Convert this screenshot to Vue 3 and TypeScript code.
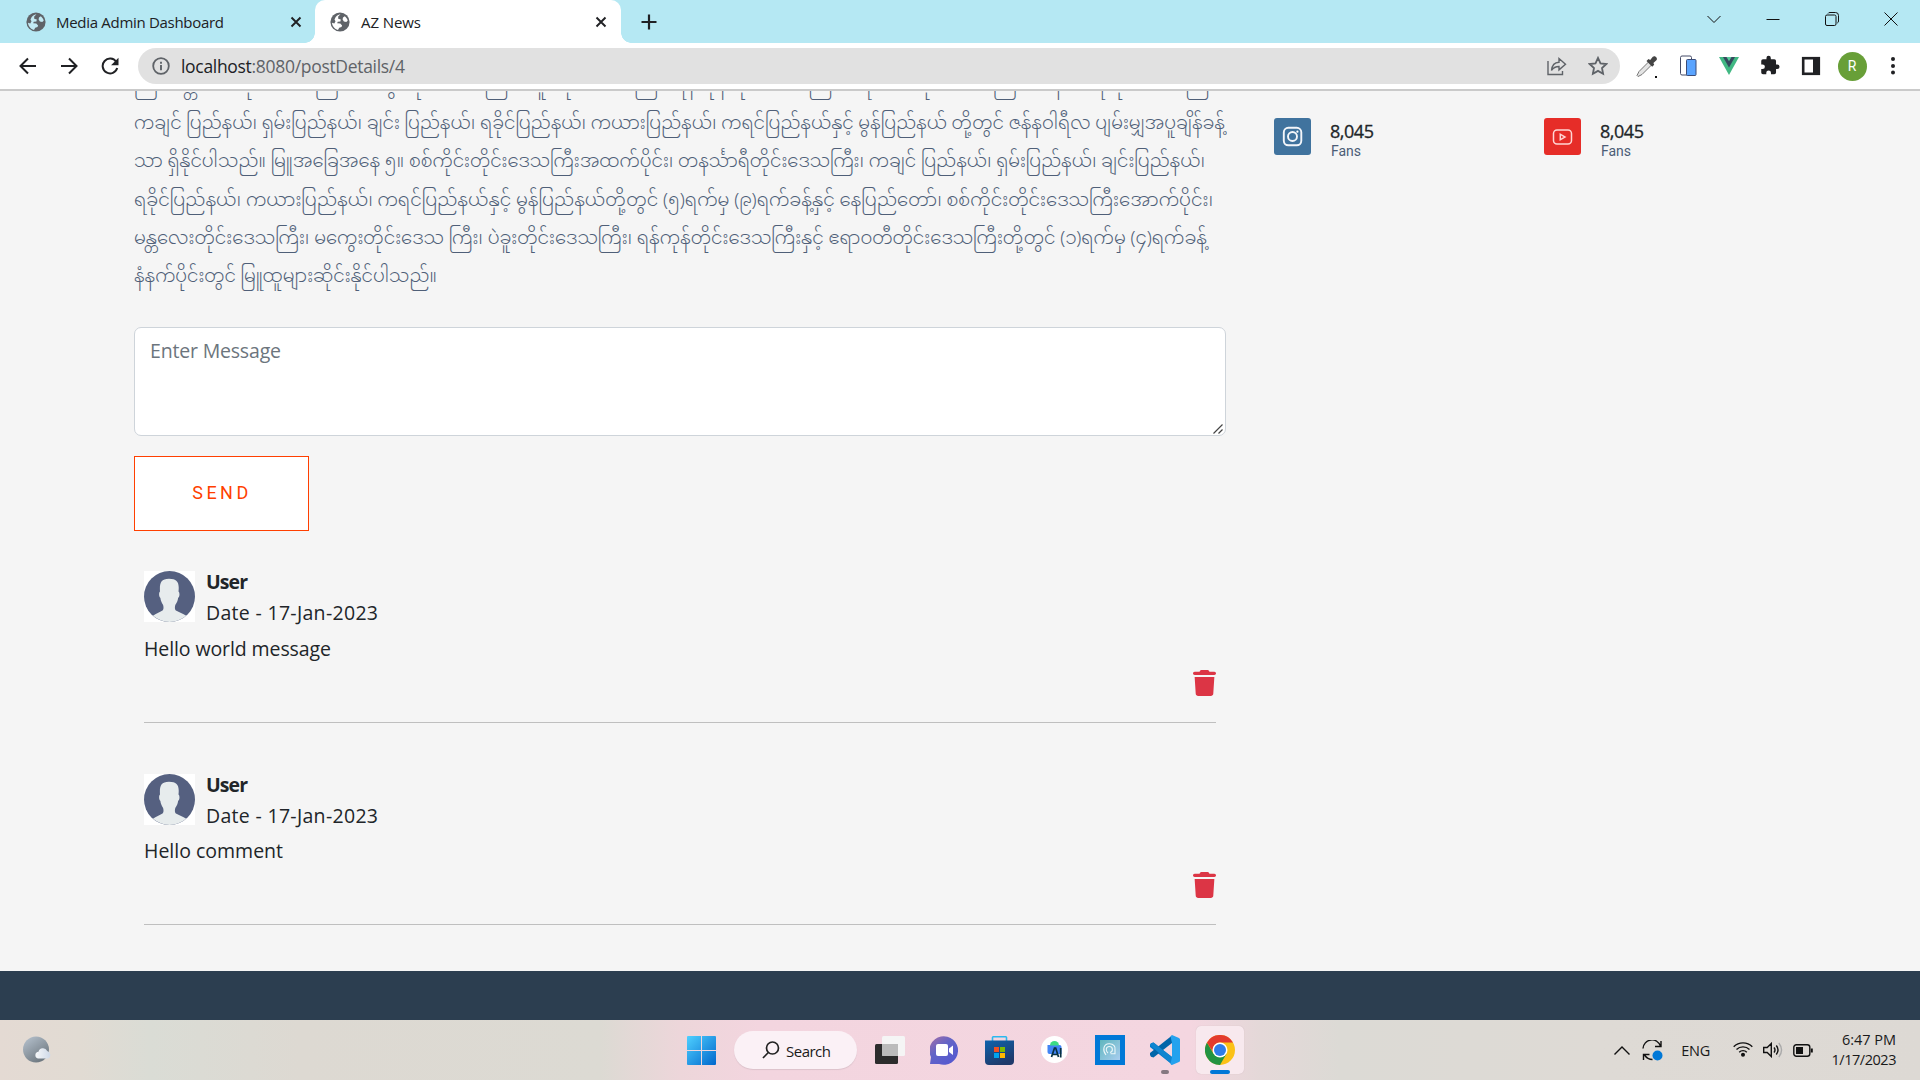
<script setup lang="ts">
import type { Directive } from 'vue'

interface Line { text: string; width: number }

const lines: Line[] = [
  { text: 'ကြီး၊ မန္တလေးတိုင်းဒေသကြီး၊ မကွေးတိုင်းဒေသကြီး၊ ပဲခူးတိုင်းဒေသကြီး၊ ရန်ကုန်တိုင်းဒေသကြီး၊ ဧရာဝတီတိုင်းဒေသကြီး၊ တနင်္သာရီတိုင်းဒေသကြီး၊', width: 1086 },
  { text: 'ကချင် ပြည်နယ်၊ ရှမ်းပြည်နယ်၊ ချင်း ပြည်နယ်၊ ရခိုင်ပြည်နယ်၊ ကယားပြည်နယ်၊ ကရင်ပြည်နယ်နှင့် မွန်ပြည်နယ် တို့တွင် ဇန်နဝါရီလ ပျမ်းမျှအပူချိန်ခန့်', width: 1091 },
  { text: 'သာ ရှိနိုင်ပါသည်။ မြူအခြေအနေ ၅။ စစ်ကိုင်းတိုင်းဒေသကြီးအထက်ပိုင်း၊ တနင်္သာရီတိုင်းဒေသကြီး၊ ကချင် ပြည်နယ်၊ ရှမ်းပြည်နယ်၊ ချင်းပြည်နယ်၊', width: 1071 },
  { text: 'ရခိုင်ပြည်နယ်၊ ကယားပြည်နယ်၊ ကရင်ပြည်နယ်နှင့် မွန်ပြည်နယ်တို့တွင် (၅)ရက်မှ (၉)ရက်ခန့်နှင့် နေပြည်တော်၊ စစ်ကိုင်းတိုင်းဒေသကြီးအောက်ပိုင်း၊', width: 1079 },
  { text: 'မန္တလေးတိုင်းဒေသကြီး၊ မကွေးတိုင်းဒေသ ကြီး၊ ပဲခူးတိုင်းဒေသကြီး၊ ရန်ကုန်တိုင်းဒေသကြီးနှင့် ဧရာဝတီတိုင်းဒေသကြီးတို့တွင် (၁)ရက်မှ (၄)ရက်ခန့်', width: 1073 },
  { text: 'နံနက်ပိုင်းတွင် မြူထူများဆိုင်းနိုင်ပါသည်။', width: 303 },
]

const comments = [
  { user: 'User', date: 'Date - 17-Jan-2023', text: 'Hello world message', width: 187 },
  { user: 'User', date: 'Date - 17-Jan-2023', text: 'Hello comment', width: 139 },
]

// Spreads the letters of a label over a given width.
const vFit: Directive<HTMLElement, number> = {
  mounted(el, { value }) {
    const n = (el.textContent ?? '').length
    const w = el.getBoundingClientRect().width
    if (n > 1) el.style.letterSpacing = `${((value - w) / (n - 1)).toFixed(3)}px`
  },
}

// Scales a whole line of script horizontally to a given width.
const vStretch: Directive<HTMLElement, number> = {
  mounted(el, { value }) {
    el.style.transform = `scaleX(${value / el.getBoundingClientRect().width})`
  },
}
</script>

<template>
  <div class="screen">
    <header class="tabs">
      <div class="tab">
        <svg class="globe" viewBox="0 0 20 20"><circle cx="10" cy="10" r="9.6" fill="#5f6368" /><path d="M10.500 2.200 8.200 4.600v2.100l2.600.8-.4 1.900-2.700.3-.5 1.600 3.100.3 1.800 1.900-.6 1.600-2.300.7-1.200 2.100c-3.300-.7-5.800-3.600-6-7.100l2.300.7 1.200-2.200-1-1.700 1.200-2.500C7.500 3 9 2.200 10.500 2.200zM13 5.500l1.800-1.200c1.400 1.100 2.500 2.600 2.900 4.400l-1.500 1.200-2.300-.5-1.300-1.900z" fill="#c3eaf3" /></svg>
        <span v-fit="168" class="tab-name">Media Admin Dashboard</span>
        <svg class="x" viewBox="0 0 12 12"><path d="M1.500 1.500l9 9M10.500 1.500l-9 9" /></svg>
      </div>
      <div class="tab active">
        <svg class="globe" viewBox="0 0 20 20"><circle cx="10" cy="10" r="9.600" fill="#5f6368" /><path d="M10.500 2.200 8.200 4.600v2.100l2.600.8-.4 1.900-2.700.3-.5 1.600 3.100.3 1.800 1.900-.6 1.600-2.300.7-1.200 2.100c-3.300-.7-5.800-3.600-6-7.100l2.300.7 1.200-2.200-1-1.700 1.200-2.500C7.500 3 9 2.200 10.500 2.200zM13 5.500l1.800-1.200c1.400 1.100 2.500 2.600 2.900 4.400l-1.500 1.200-2.300-.5-1.300-1.900z" fill="#fff" /></svg>
        <span v-fit="60" class="tab-name">AZ News</span>
        <svg class="x" viewBox="0 0 12 12"><path d="M1.500 1.500l9 9M10.500 1.500l-9 9" /></svg>
      </div>
      <svg class="plus" viewBox="0 0 16 16"><path d="M8 .5v15M.5 8h15" /></svg>
      <div class="window">
        <svg viewBox="0 0 14 14"><path d="M.5 4l6.500 6.500L13.500 4" /></svg>
        <svg viewBox="0 0 14 14"><path d="M.5 7.500h13" /></svg>
        <svg viewBox="0 0 14 14"><rect x=".5" y="3" width="10.500" height="10.500" rx="1.500" /><path d="M3 1.500Q3.500.5 5 .5h5.500a3 3 0 0 1 3 3V9q0 1.500-1.200 2" /></svg>
        <svg viewBox="0 0 14 14"><path d="M.5.5l13 13M13.500.5l-13 13" /></svg>
      </div>
    </header>

    <div class="toolbar">
      <svg class="nav" viewBox="0 0 18 18"><path d="M17 9H2M9 1.500L1.500 9 9 16.500" /></svg>
      <svg class="nav" viewBox="0 0 18 18"><path d="M1 9h15M9 1.500L16.500 9 9 16.500" /></svg>
      <svg class="nav" viewBox="0 0 18 18"><path d="M15.200 4.800A7.400 7.400 0 1 0 16.200 11" /><path d="M17.500.8v7.400h-7.400z" fill="#202124" stroke="none" /></svg>
      <div class="omnibox">
        <svg class="info" viewBox="0 0 18 18"><circle cx="9" cy="9" r="7.800" fill="none" stroke="#5f6368" stroke-width="1.800" /><path d="M9 8v5.200M9 4.700v2" stroke="#5f6368" stroke-width="1.900" /></svg>
        <span v-fit="224" class="url"><b>localhost</b>:8080/postDetails/4</span>
        <svg class="share" viewBox="0 0 20 20"><path d="M1 5v13.500h14.500V15M4.500 14.500c.5-5 3-8 7.500-8.200V2.500l6.500 5.700-6.500 5.700V10.500c-3.500 0-5.800 1.200-7.500 4z" /></svg>
        <svg class="star" viewBox="0 0 20 20"><path d="M10 1.900l2.500 5.400 5.800.7-4.300 4 1.100 5.800-5.100-2.900-5.100 2.900L6 12 1.700 8l5.800-.7z" /></svg>
      </div>
      <div class="extensions">
        <svg viewBox="0 0 24 24"><path d="M14 7.500l3 3L7 20.500 3 22.500l-1-1L4 17.500z" fill="#e4e4e4" stroke="#777" /><path d="M11.500 7l2-2 1.700 1 2.600-3.200c2-2 5.500 1.300 3.600 3.500l-3 2.700.8 1.800-2 2z" fill="#444" /><rect x="20" y="22" width="2" height="2" fill="#111" /></svg>
        <svg viewBox="0 0 24 24"><rect x="4.500" y="2" width="11" height="19" rx="1.500" fill="#fff" stroke="#454b66" /><rect x="10.500" y="5.500" width="9.500" height="16" rx="1" fill="#5aa4ff" stroke="#3b4c78" /></svg>
        <svg viewBox="0 0 24 24"><path d="M2 3h20L12 21z" fill="#41b883" /><path d="M6 3h12l-6 10.500z" fill="#35495e" /><path d="M9.500 3h5L12 7.200z" fill="#59cb9a" /></svg>
        <svg viewBox="0 0 24 24"><path d="M20.500 11H19V7a2 2 0 0 0-2-2h-4V3.500a2.500 2.500 0 0 0-5 0V5H4a2 2 0 0 0-2 2v3.800h1.500a2.700 2.700 0 0 1 0 5.400H2V20a2 2 0 0 0 2 2h3.800v-1.500a2.700 2.700 0 0 1 5.400 0V22H17a2 2 0 0 0 2-2v-4h1.500a2.500 2.500 0 0 0 0-5z" fill="#202124" transform="translate(1.500 1) scale(.87)" /></svg>
        <svg viewBox="0 0 24 24"><rect x="4.200" y="4.200" width="15.600" height="15.600" fill="#fff" stroke="#202124" stroke-width="2.600" /><path d="M14 3h7v18h-7z" fill="#202124" /></svg>
        <span class="profile">R</span>
        <svg viewBox="0 0 24 24"><circle cx="12" cy="5" r="2" /><circle cx="12" cy="12" r="2" /><circle cx="12" cy="18.500" r="2" /></svg>
      </div>
    </div>

    <main class="page">
      <section class="post">
        <div class="article">
          <p v-for="line in lines" :key="line.text"><span v-stretch="line.width">{{ line.text }}</span></p>
        </div>
        <div class="message">
          <span v-fit="131">Enter Message</span>
          <svg viewBox="0 0 10 10"><path d="M.5 9.500l9-9M5.500 9.500l4-4" /></svg>
        </div>
        <button class="send">SEND</button>
        <article v-for="(c, i) in comments" :key="i" class="comment">
          <div class="author">
            <svg class="avatar" viewBox="0 0 51 51"><rect width="51" height="51" fill="#fff" /><circle cx="25.500" cy="25.500" r="25.500" fill="#556080" /><path d="M9 44.800c3-2.300 6.500-3.500 9.500-5.300 1.300-.8 1.200-4.500.5-5.800-1.300-2-2.300-4-2.600-6.700-1.600-1-1.700-5.700-.4-6.500-.5-8 .5-12.800 9-12.800s10.500 4 9.500 12.800c1.400.8 1.300 5.500-.4 6.500-.3 2.700-1.400 4.800-2.700 6.700-.7 1.300-.8 5 .5 5.800 3.300 1.800 7 3 10.300 5.300a25.500 25.500 0 0 1-33.200 0z" fill="#e7eced" /></svg>
            <div class="who">
              <span><strong v-fit="42">{{ c.user }}</strong></span>
              <span><span v-fit="172">{{ c.date }}</span></span>
            </div>
          </div>
          <div class="text"><span v-fit="c.width">{{ c.text }}</span></div>
          <svg class="trash" viewBox="0 0 448 512" preserveAspectRatio="none"><path d="M135.200 17.700C140.600 6.800 151.700 0 163.800 0H284.200c12.100 0 23.200 6.800 28.600 17.700L320 32h96c17.700 0 32 14.300 32 32s-14.300 32-32 32H32C14.300 96 0 81.700 0 64S14.300 32 32 32h96l7.200-14.300zM32 136H416L394.800 467c-1.600 25.300-22.600 45-47.900 45H101.100c-25.300 0-46.300-19.700-47.900-45L32 136z" /></svg>
        </article>
      </section>
      <aside class="socials">
        <div class="social">
          <svg viewBox="0 0 37 37"><rect width="37" height="37" rx="3" fill="#40739e" /><g fill="none" stroke="#f3f6fa" stroke-width="1.900"><rect x="9.800" y="9.800" width="17.500" height="17.500" rx="4.500" /><circle cx="18.500" cy="18.500" r="4.500" /></g><circle cx="23.400" cy="13.700" r="1.100" fill="#fff" /></svg>
          <div><strong v-fit="44">8,045</strong><small>Fans</small></div>
        </div>
        <div class="social">
          <svg viewBox="0 0 37 37"><rect width="37" height="37" rx="3" fill="#e62d28" /><g fill="none" stroke="#ffd6d4" stroke-width="1.500"><rect x="9.500" y="12" width="18" height="14" rx="3.500" /><path d="M16.300 16.200v5.600l4.700-2.800z" /></g></svg>
          <div><strong v-fit="44">8,045</strong><small>Fans</small></div>
        </div>
      </aside>
    </main>
    <footer class="footer"></footer>

    <div class="taskbar">
      <svg class="weather" viewBox="0 0 30 28"><defs><linearGradient id="moon" x2=".7" y2="1"><stop stop-color="#b9c5d1" /><stop offset="1" stop-color="#6c767e" /></linearGradient><linearGradient id="cloud" x2="1"><stop stop-color="#f5f7f9" /><stop offset="1" stop-color="#cfd9e8" /></linearGradient></defs><circle cx="13" cy="13.500" r="13" fill="url(#moon)" /><path d="M15 22.500a3.400 3.400 0 0 1 .5-6.700 4.600 4.600 0 0 1 8.700-.8 4 4 0 0 1 1 7.500z" fill="url(#cloud)" /></svg>
      <div class="apps">
        <svg class="start" viewBox="0 0 29 29"><defs><linearGradient id="win" x2="1" y2="1"><stop stop-color="#4fd0ff" /><stop offset="1" stop-color="#0067cc" /></linearGradient></defs><path d="M1 0h13v14H0V1q0-1 1-1zM15 0h13q1 0 1 1v13H15zM0 15h14v14H1q-1 0-1-1zM15 15h14v13q0 1-1 1H15z" fill="url(#win)" /></svg>
        <div class="search">
          <svg viewBox="0 0 18 18"><circle cx="10.500" cy="7" r="6" /><path d="M6.300 11.500L1 17" /></svg>
          <span v-fit="45">Search</span>
        </div>
        <svg class="taskview" viewBox="0 0 30 28"><rect y="8" width="23" height="20" rx="1.500" fill="#2c2c2c" /><rect x="7" width="23" height="20" rx="1.500" fill="#f5f5f5" /><path d="M7 8h16v12H8.500Q7 20 7 18.500z" fill="#bbb" /></svg>
        <svg class="chat" viewBox="0 0 29 29"><defs><linearGradient id="cht" x2=".8" y2="1"><stop stop-color="#a66fa6" /><stop offset=".45" stop-color="#6264c7" /><stop offset="1" stop-color="#5558d0" /></linearGradient></defs><path d="M0 28l1-7A14.300 14.300 0 1 1 9 28z" fill="url(#cht)" /><rect x="6" y="8" width="12" height="12" rx="2" fill="#fff" /><path d="M19 12.500l4-3v9.500l-4-3z" fill="#fff" /></svg>
        <svg class="store" viewBox="0 0 29 29"><defs><linearGradient id="sto" x2=".5" y2="1"><stop stop-color="#0f63ad" /><stop offset="1" stop-color="#1f3a6b" /></linearGradient></defs><path d="M7.500 6V1.500q0-.7.700-.7h12.600q.7 0 .7.700V6" fill="none" stroke="#2bb8ee" stroke-width="1.600" /><path d="M0 4.500h29V25q0 4-4 4H4q-4 0-4-4z" fill="url(#sto)" /><path d="M9 11h5v5H9z" fill="#f25022" /><path d="M15 11h5v5h-5z" fill="#7fba00" /><path d="M9 17h5v5H9z" fill="#00a4ef" /><path d="M15 17h5v5h-5z" fill="#ffb900" /></svg>
        <svg class="studio" viewBox="0 0 27 27"><circle cx="13.500" cy="13.500" r="13.500" fill="#fff" /><path d="M6.500 9h12q2 0 2 2v7h-12q-2 0-2-2z" fill="#4285f4" /><path d="M9 9.500a4.500 4.500 0 0 1 9 0z" fill="#3ddc84" /><path d="M10.500 21l3-9h1.200L17.500 21M12 18.500h4.500M19.700 12v9.500" fill="none" stroke="#073042" stroke-width="1.700" /></svg>
        <svg class="reader" viewBox="0 0 30 30"><defs><linearGradient id="rd" x2="1" y2="1"><stop stop-color="#5fb6bd" /><stop offset="1" stop-color="#a9cdf0" /></linearGradient></defs><rect width="30" height="30" fill="#0078d7" /><rect x="5" y="5" width="20" height="20" fill="url(#rd)" /><g fill="none" stroke="#ecf7f9" stroke-width="1.100"><path d="M11 20c-3.500-4-3-11 3-11.200 5-.2 6.500 3 6 5.700v4.300h-4.500M13 18c-3-2.500-2-6.500 1.300-6.500 4 0 4 5.300.7 6" /></g></svg>
        <div class="app code">
          <svg viewBox="0 0 30 30"><path d="M22 22L3.500 7.500 1 8.300 0 10v2l22 17.500z" fill="#007acc" /><path d="M22 8L3.500 22.500 1 21.700 0 20v-2L22 .5z" fill="#0065a9" /><path d="M0 10l1-1.700 2.500-.8L22 22v7.500z" fill="#0f85d0" /><path d="M22 0l7 3q1 .5 1 1.500v21q0 1-1 1.500l-7 3q-1 0-1.500-1.200L22 22V8l-1.500-6.500z" fill="#24a2ee" /></svg>
          <i></i>
        </div>
        <div class="app chrome">
          <svg viewBox="0 0 30 30"><circle cx="15" cy="15" r="15" fill="#fbc116" /><path d="M2 7.500A15 15 0 0 0 15 30l6.500-11.200L15 15 8.500 18.700z" fill="#229342" /><path d="M2 7.500A15 15 0 0 1 28 7.500H15a7.500 7.500 0 0 0-6.800 10z" fill="#e33b2e" /><circle cx="15" cy="15" r="7.500" fill="#fff" /><circle cx="15" cy="15" r="6" fill="#2f7de9" /></svg>
          <i></i>
        </div>
      </div>
      <div class="tray">
        <svg class="up" viewBox="0 0 16 9"><path d="M.5 8.500L8 1l7.500 7.500" /></svg>
        <svg class="sync" viewBox="0 0 21 21"><path d="M1 8.500A9 9 0 0 1 18.500 6M19 1v5.500h-6M1.500 20v-5.500h6M2.500 15c2 3 4.500 4.500 8 4.500" /><circle cx="15.500" cy="15.500" r="5" fill="#0078d7" stroke="none" /></svg>
        <span v-fit="29" class="lang">ENG</span>
        <svg class="wifi" viewBox="0 0 20 16"><path d="M.7 5.800a13 13 0 0 1 18.600 0M3.500 8.600a9.200 9.200 0 0 1 13 0M6.200 11.200a5.400 5.400 0 0 1 7.600 0" /><circle cx="10" cy="13.700" r="1.300" fill="#111" /></svg>
        <svg class="sound" viewBox="0 0 20 16"><path d="M.7 5.500h3.500L8.300 1.500v13L4.200 10.500H.7zM11 5.500q2 2.500 0 5M13.300 3.500q3.500 4.500 0 9" /><path d="M15.800 1q5.500 7 0 14" stroke="#aaa" /></svg>
        <svg class="battery" viewBox="0 0 20 13"><rect x=".8" y=".8" width="16" height="11.400" rx="2.500" /><rect x="3" y="3" width="7" height="7" fill="#111" stroke="none" /><path d="M18.800 4.500v4" stroke-width="2" /></svg>
        <div class="clock"><span><span v-fit="54">6:47 PM</span></span><span><span v-fit="65">1/17/2023</span></span></div>
      </div>
    </div>
  </div>
</template>

<style>
body { margin: 0; overflow: hidden; }
</style>

<style scoped>
.screen { width: 1920px; height: 1080px; overflow: hidden; display: flex; flex-direction: column; background: #f5f5f5; color: #212529; font-family: "Open Sans", "Noto Sans", sans-serif; }
svg { display: block; flex: none; }
span, strong { white-space: nowrap; }

.tabs { height: 43px; flex: none; display: flex; align-items: center; background: #b5e8f3; }
.tab { box-sizing: border-box; height: 43px; width: 315px; display: flex; align-items: center; padding: 0 13px 0 26px; }
.tab.active { position: relative; width: 306px; padding: 0 14px 0 15px; background: #fff; border-radius: 10px 10px 0 0; }
.tab.active::before, .tab.active::after { content: ""; position: absolute; bottom: 0; width: 10px; height: 10px; }
.tab.active::before { left: -10px; background: radial-gradient(circle at 0 0, transparent 9.500px, #fff 10px); }
.tab.active::after { right: -10px; background: radial-gradient(circle at 100% 0, transparent 9.500px, #fff 10px); }
.globe { width: 20px; height: 20px; }
.tab-name { font-size: 15px; line-height: 20px; margin-left: 10px; color: #202124; }
.active .tab-name { margin-left: 11px; }
.x { width: 12px; height: 12px; margin-left: auto; stroke: #202124; stroke-width: 1.900; }
.plus { width: 16px; height: 16px; margin-left: 20px; stroke: #202124; stroke-width: 2.200; }
.window { margin-left: auto; display: flex; gap: 45px; padding: 0 22px 6px 0; }
.window svg { width: 14px; height: 14px; fill: none; stroke: #111; stroke-width: 1; }

.toolbar { box-sizing: border-box; height: 48px; flex: none; display: flex; align-items: center; background: #fff; border-bottom: 2px solid #cacaca; padding: 0 16px 0 19px; }
.nav { width: 18px; height: 18px; margin-right: 23px; fill: none; stroke: #202124; stroke-width: 2; }
.omnibox { box-sizing: border-box; height: 36px; width: 1482px; margin-left: -4px; border-radius: 18px; background: #e1e1e1; display: flex; align-items: center; padding: 0 12px 0 14px; flex: none; }
.info { width: 18px; height: 18px; }
.url { font-size: 17.500px; line-height: 24px; margin-left: 11px; color: #5f6368; }
.url b { font-weight: 400; color: #202124; }
.share { width: 20px; height: 20px; margin-left: auto; margin-right: 21px; fill: none; stroke: #5f6368; stroke-width: 1.400; }
.star { width: 20px; height: 20px; fill: none; stroke: #5f6368; stroke-width: 1.800; }
.extensions { display: flex; align-items: center; gap: 17px; margin-left: 15px; }
.extensions svg { width: 24px; height: 24px; fill: #202124; }
.profile { width: 29px; height: 29px; margin: 0 -2.500px; border-radius: 50%; background: #689f38; color: #fff; font: 14px/29px Roboto, sans-serif; text-align: center; }

.page { height: 880px; flex: none; display: flex; overflow: hidden; }
.post { width: 1092px; margin-left: 134px; }
.article { height: 230px; margin-top: -23px; color: #4f5f78; }
.article p { margin: 0; height: 38.200px; line-height: 38px; font-size: 18px; white-space: nowrap; font-family: "Noto Sans Myanmar", "Myanmar Text", Padauk, "Noto Sans", "Open Sans", sans-serif; font-weight: 300; }
.article span { display: inline-block; transform-origin: 0 50%; }
.message { box-sizing: border-box; position: relative; height: 109px; margin-top: 29px; padding: 8px 15px; border: 1px solid #ced4da; border-radius: 7px; background: #fff; color: #6c757d; font-size: 19.500px; line-height: 30px; }
.message svg { position: absolute; right: 2px; bottom: 1px; width: 10px; height: 10px; stroke: #444; stroke-width: 1.200; }
.send { display: block; box-sizing: border-box; width: 175px; height: 75px; margin-top: 20px; padding: 0 0 2px 1px; border: 1px solid #ff3f00; background: #fff; color: #ff3f00; font: 18px/24px Roboto, sans-serif; letter-spacing: 3.500px; }
.comment { box-sizing: border-box; height: 192px; margin: 0 10px 10px; padding-top: 40px; border-bottom: 1px solid #bfbfbf; font-size: 19.500px; }
.comment + .comment { padding-top: 41px; }
.comment + .comment .text { margin-top: 11px; }
.author { display: flex; height: 51px; }
.avatar { width: 51px; height: 51px; }
.who { margin: -4px 0 0 11px; display: flex; flex-direction: column; line-height: 30.500px; }
.text { height: 30px; line-height: 30px; margin: 12px 0 0; }
.trash { width: 23px; height: 26px; margin: 6px 0 0 auto; fill: #dc3545; }

.socials { display: flex; margin: 27px 0 0 48px; align-self: flex-start; }
.social { width: 270px; display: flex; }
.social svg { width: 37px; height: 37px; }
.social div { display: flex; flex-direction: column; align-items: flex-start; margin: 1px 0 0 19px; }
.social strong { font-size: 18px; line-height: 24px; font-weight: 500; -webkit-text-stroke: .3px; }
.social small { font: 14px/16px Roboto, sans-serif; color: #4b5c76; margin-left: 1px; }
.footer { height: 49px; flex: none; background: #2c3e50; }

.taskbar { height: 60px; flex: none; display: flex; align-items: center; background: linear-gradient(90deg, #e4dad3 0, #e1dbd3 80px, #dadcd5 150px, #ddd9d2 300px, #dcdad3 600px, #edd6da 680px, #f3d5df 760px, #f4d6e0 1190px, #e4d8d8 1260px, #dcdad5 1340px, #dedad5 1600px, #ddd9d4 1920px); color: #1a1a1a; }
.weather { width: 30px; height: 28px; margin: 0 0 1px 23px; }
.apps { display: flex; align-items: center; margin-left: 634px; }
.start { width: 29px; height: 29px; }
.search { box-sizing: border-box; width: 123px; height: 38px; margin-left: 18px; padding-left: 28px; border-radius: 19px; background: #fbf1f6; display: flex; align-items: center; box-shadow: 0 1px 1px #dcc2cb; }
.search svg { width: 18px; height: 18px; fill: none; stroke: #222; stroke-width: 1.700; }
.search span { font-size: 15px; line-height: 20px; margin: 1px 0 0 6px; }
.taskview { width: 30px; height: 28px; margin-left: 18px; }
.chat { width: 29px; height: 29px; margin-left: 25px; }
.store { width: 29px; height: 29px; margin-left: 26px; }
.studio { width: 27px; height: 27px; margin: 0 0 2px 27px; }
.reader { width: 30px; height: 30px; margin-left: 27px; }
.app { width: 48px; height: 48px; display: flex; flex-direction: column; align-items: center; border-radius: 5px; }
.app svg { width: 30px; height: 30px; margin-top: 9px; }
.app i { height: 4px; margin-top: 5px; border-radius: 2px; }
.code { margin-left: 16px; }
.code i { width: 8px; background: #857880; }
.chrome { margin-left: 7px; background: #f8e9ee; box-shadow: 0 0 1px #c9b2bb; }
.chrome i { width: 20px; background: #0078d7; }
.tray { display: flex; align-items: center; margin-left: auto; padding-right: 24px; font-size: 14.500px; }
.tray svg { fill: none; stroke: #111; stroke-width: 1.400; }
.up { width: 16px; height: 9px; }
.sync { width: 21px; height: 21px; margin-left: 12px; }
.lang { margin-left: 18px; }
.wifi { width: 20px; height: 16px; margin: 0 0 2px 23px; }
.sound { width: 20px; height: 16px; margin-left: 10px; }
.battery { width: 20px; height: 13px; margin-left: 10px; }
.clock { display: flex; flex-direction: column; align-items: flex-end; width: 64px; margin-left: 19px; line-height: 20px; }
</style>
